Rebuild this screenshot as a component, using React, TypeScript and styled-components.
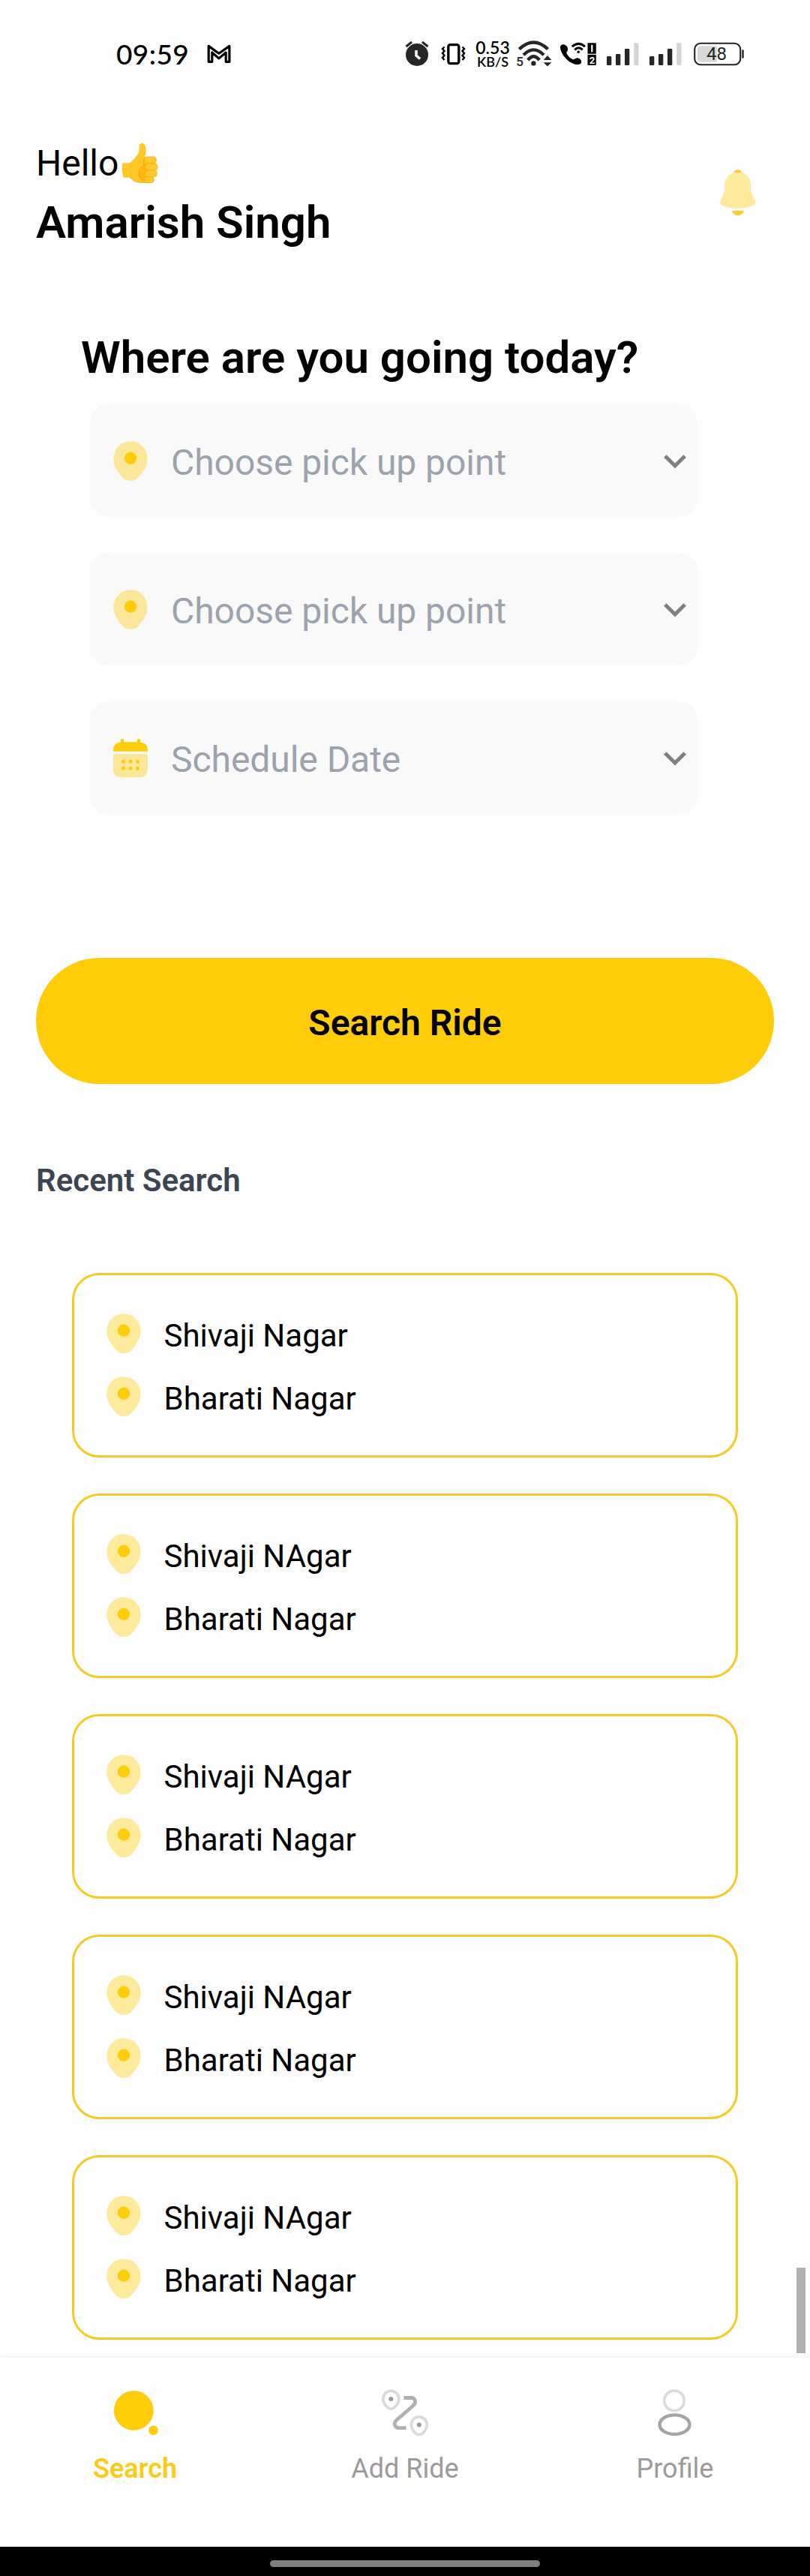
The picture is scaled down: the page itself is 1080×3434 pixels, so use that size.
import React from 'react';
import styled, { createGlobalStyle, css } from 'styled-components';

const YELLOW = '#fecc09';
const INK = '#262626';

const GlobalStyle = createGlobalStyle`
  *, *::before, *::after { box-sizing: border-box; }
  body {
    margin: 0;
    background: #fff;
    color: #000;
    font-family: Roboto, "Liberation Sans", sans-serif;
  }
  svg { display: block; flex: none; overflow: visible; }
`;

const Screen = styled.div`
  display: flex;
  flex-direction: column;
  width: 1080px;
  height: 3434px;
  overflow: hidden;
  background: #fefefe;
`;

/* ---------- status bar ---------- */

const StatusBar = styled.div`
  display: flex;
  flex: none;
  align-items: flex-start;
  justify-content: space-between;
  height: 144px;
  padding: 48px 88px 0 155px;
`;

const StatusGroup = styled.div`
  display: flex;
  align-items: center;
  height: 48px;
`;

const Clock = styled.span`
  width: 120px;
  font: 500 37px/44px Lato, sans-serif;
  letter-spacing: 0.4px;
`;

const Spacer = styled.span<{ $w: number }>`
  flex: none;
  width: ${(p) => p.$w}px;
`;

const NetSpeed = styled.div`
  display: flex;
  flex-direction: column;
  align-items: center;
  width: 50px;
  height: 40px;
  font-family: Lato, sans-serif;
  font-weight: 600;
  white-space: nowrap;
`;

const SpeedValue = styled.span`
  font-size: 23px;
  line-height: 22px;
`;

const SpeedUnit = styled.span`
  font-size: 18px;
  line-height: 16px;
`;

/* ---------- main content ---------- */

const Content = styled.main`
  display: flex;
  position: relative;
  flex: 1;
  flex-direction: column;
  min-height: 0;
  padding-top: 45px;
`;

const Header = styled.header`
  display: flex;
  justify-content: space-between;
  height: 143px;
  padding: 0 70px 0 48px;
`;

const Greeting = styled.div`
  display: flex;
  flex-direction: column;
  gap: 15px;
`;

const HelloLine = styled.div`
  display: flex;
  align-items: center;
  font-size: 48px;
  line-height: 57px;
`;

const UserName = styled.div`
  font-size: 60px;
  font-weight: 600;
  line-height: 71px;
`;

const BellButton = styled.button`
  display: flex;
  width: 52px;
  height: 65px;
  margin-top: 36px;
  padding: 0;
  border: 0;
  background: none;
`;

const Title = styled.h1`
  height: 71px;
  margin: 109px 0 0 108px;
  font-size: 60px;
  font-weight: 600;
  line-height: 71px;
`;

const Fields = styled.div`
  display: flex;
  flex-direction: column;
  gap: 48px;
  width: 810px;
  margin: 27px 0 0 120px;
`;

const Field = styled.div`
  display: flex;
  align-items: center;
  height: 150px;
  padding: 2px 15px 0 31px;
  border-radius: 24px;
  background: #f9f9f9;
`;

const Placeholder = styled.span`
  flex: 1;
  padding: 3px 0 0 31px;
  color: #9ca3af;
  font-size: 48px;
  line-height: 57px;
  letter-spacing: -0.05px;
`;

const SearchButton = styled.button`
  display: flex;
  flex: none;
  align-items: center;
  justify-content: center;
  height: 168px;
  margin: 192px 48px 0;
  padding: 5px 0 0;
  border: 0;
  border-radius: 84px;
  background: ${YELLOW};
  color: #000;
  font: 600 48px/57px Roboto, sans-serif;
`;

const SectionTitle = styled.h2`
  margin: 104px 0 0 48px;
  color: #3b4554;
  font-size: 42px;
  font-weight: 600;
  line-height: 49px;
`;

const RecentList = styled.div`
  display: flex;
  flex-direction: column;
  gap: 48px;
  margin: 99px 96px 0;
`;

const RecentCard = styled.article`
  display: flex;
  flex: none;
  flex-direction: column;
  height: 246px;
  padding: 51px 43px 0;
  border: 3px solid #f6ca25;
  border-radius: 36px;
`;

const Stop = styled.div`
  display: flex;
  align-items: flex-start;
  height: 84px;
`;

const StopName = styled.span`
  padding: 5px 0 0 30.5px;
  font-size: 42px;
  line-height: 49px;
`;

const ScrollThumb = styled.div`
  position: absolute;
  right: 6px;
  bottom: 6px;
  width: 12px;
  height: 114px;
  background: #afafaf;
`;

/* ---------- bottom navigation ---------- */

const TabBar = styled.nav`
  display: grid;
  position: relative;
  flex: none;
  grid-template-columns: repeat(3, 1fr);
  height: 252px;
  background: #fefefe;
  box-shadow: 0 -1px 7px rgba(0, 0, 0, 0.06);
`;

const Tab = styled.a<{ $active?: boolean }>`
  display: flex;
  flex-direction: column;
  align-items: center;
  padding-top: 36px;
  color: #9b9b9b;
  font-size: 36px;
  line-height: 42px;
  ${(p) =>
    p.$active &&
    css`
      color: #fbcb18;
      font-weight: 600;
    `}
`;

const TabIcon = styled.span`
  display: flex;
  width: 72px;
  height: 72px;
  margin-bottom: 19px;
`;

const GestureBar = styled.div`
  display: flex;
  flex: none;
  justify-content: center;
  height: 39px;
  padding-top: 18px;
  background: #000;
`;

const GesturePill = styled.div`
  width: 360px;
  height: 9px;
  border-radius: 5px;
  background: #808080;
`;

/* ---------- icons ---------- */

const MailIcon = () => (
  <svg width="34" height="28" viewBox="274 58 34 28">
    <path
      d="M277.2 82.3V61.4L290.8 71.2 304.9 61.4V82.3H300.2V70L290.8 77.9 281.8 70V82.3Z"
      fill="none"
      stroke="#000"
      strokeWidth="3.2"
      strokeLinejoin="round"
    />
  </svg>
);

const AlarmIcon = () => (
  <svg width="32" height="36" viewBox="540 55 32 36">
    <circle cx="556" cy="74" r="15" fill={INK} />
    <path d="M541.5 63 549 57M563 57 570.5 63" stroke={INK} strokeWidth="3" />
    <path d="M555 68V75L560 79.5" fill="none" stroke="#fff" strokeWidth="3.6" />
  </svg>
);

const VibrateIcon = () => (
  <svg width="32" height="36" viewBox="588 54 32 36">
    <rect x="597.8" y="59.6" width="14" height="25" rx="2.5" fill="none" stroke="#000" strokeWidth="3.3" />
    <path
      d="M592.5 62.5 590 65 592.5 68 590 71 592.5 74 590 77 592.5 80M616.5 62.5 619 65 616.5 68 619 71 616.5 74 619 77 616.5 80"
      fill="none"
      stroke="#000"
      strokeWidth="2.4"
    />
  </svg>
);

const WifiIcon = () => (
  <svg width="47" height="40" viewBox="688 52 47 40">
    <g fill="none" stroke={INK} strokeWidth="4.4">
      <path d="M692.3 65.5Q711.5 47.5 730.5 65.5" />
      <path d="M698 73.2Q711.5 59.5 725 73.2" />
      <path d="M703.8 80Q711.5 70.5 719.2 80" />
    </g>
    <circle cx="711.4" cy="84.4" r="3.2" fill={INK} />
    <path d="M724.6 80 730 74 735.4 80ZM724.6 83.3 730 88.5 735.4 83.3Z" fill={INK} />
    <text x="688.3" y="88" fontFamily="Roboto, sans-serif" fontWeight="500" fontSize="17" fill={INK}>
      5
    </text>
  </svg>
);

const CallIcon = () => (
  <svg width="50" height="34" viewBox="746 55 50 34">
    <path
      d="M747.2 65C746 60 750 58.4 752.5 59.5 755.5 60.5 757.5 63.5 757 66.5 756.5 69 754.8 69.2 755.6 71.3 757 75 760.3 77.7 763.8 79.2 765.8 80 766.3 77.5 769.5 77.2 772.5 77.2 776 80 775 83.5 774 86.5 769 86.5 766 85.5 757 82.5 749.5 74.5 747.2 65Z"
      fill="#000"
    />
    <g fill="none" stroke="#000" strokeWidth="3">
      <path d="M762.8 62.2Q771.5 54.5 780 62.2" />
      <path d="M766.3 66.4Q771.5 61 776.7 66.4" />
    </g>
    <circle cx="771.2" cy="69.3" r="1.8" fill="#000" />
    <rect x="783.5" y="57.3" width="11.3" height="14.4" fill="#000" />
    <rect x="783.5" y="72.9" width="11.3" height="14" fill="#000" />
    <path d="M789.3 59.8V69.4" stroke="#fff" strokeWidth="2.2" />
    <text x="785.7" y="84.6" fontFamily="Roboto, sans-serif" fontWeight="700" fontSize="13" fill="#fff">
      2
    </text>
  </svg>
);

const SignalIcon = () => (
  <svg width="43" height="34" viewBox="0 0 43 34">
    <g fill={INK}>
      <rect y="20" width="6.3" height="12" rx="1.2" />
      <rect x="12" y="17" width="6.3" height="15" rx="1.2" />
      <rect x="24" y="10" width="6.3" height="22" rx="1.2" />
    </g>
    <rect x="36.2" y="2.2" width="6.3" height="29.8" rx="1.2" fill="#d4d4d4" />
  </svg>
);

const BatteryIcon = () => (
  <svg width="67" height="32" viewBox="925 56.5 67 32">
    <rect x="926.2" y="58.2" width="61" height="28.6" rx="8" fill="none" stroke={INK} strokeWidth="2.1" />
    <path d="M955.7 61.8V83.2H935Q930 83.2 930 78.5V66.5Q930 61.8 935 61.8Z" fill="#d8d8d8" />
    <path d="M990.5 67V78" stroke={INK} strokeWidth="2.4" />
    <text x="942" y="80.8" fontFamily="Roboto, sans-serif" fontSize="24" fill={INK}>
      48
    </text>
  </svg>
);

const ThumbIcon = () => (
  <svg width="49.33" height="54.67" viewBox="398 60 148 164">
    <path
      d="M405 142Q418 144 432 141 450 126 465 104 470 96 469 72 471 63 481 63 493 64 496 84 498 103 490 122L488 216Q488 221 520 221 460 222 448 214 436 202 430 199 418 202 406 199 398 180 401 148 402 142 405 142Z"
      fill="#ffc828"
    />
    <path d="M480 158 500 124V216H486Q462 206 466 178Z" fill="#ffb60d" />
    <g fill="#ffc828" stroke="#eda90c" strokeWidth="2">
      <rect x="488" y="117" width="49" height="27" rx="12" />
      <rect x="493" y="144" width="49" height="27" rx="12" />
      <rect x="492" y="171" width="48" height="26" rx="12" />
      <rect x="489" y="197" width="39" height="24" rx="11" />
    </g>
    <path
      d="M490 122Q484 142 488 154 472 160 466 174M470 172Q464 194 486 214M430 199Q440 204 450 215 466 221 505 221"
      fill="none"
      stroke="#eda90c"
      strokeWidth="3"
    />
  </svg>
);

const BellIcon = () => (
  <svg width="51.67" height="65" viewBox="175 75 155 195">
    <path
      d="M236 89Q252 83 268 89 304 104 305 142 303 172 314 187 325 200 323 211 320 220 306 225 280 234 252 234 224 234 198 225 184 220 181 211 180 200 190 187 201 172 199 142 200 104 236 89Z"
      fill="#ffea9c"
    />
    <path d="M236 88Q240 79 252 79 264 79 268 88 252 94 236 88Z" fill="#fccd2b" />
    <path d="M228 244Q252 240 278 244 268 262 252 262 236 262 228 244Z" fill="#fccd2b" />
  </svg>
);

const PinIcon = () => (
  <svg width="46" height="53.33" viewBox="183 475 138 160">
    <path
      d="M252 476C292 476 320 508 320 546 320 574 303 597 288 615 276 630 264 634 252 634 240 634 228 630 216 615 201 597 184 574 184 546 184 508 212 476 252 476Z"
      fill={YELLOW}
      fillOpacity="0.4"
    />
    <circle cx="252" cy="543" r="24.5" fill={YELLOW} />
  </svg>
);

const CalendarIcon = () => (
  <svg width="46" height="53.33" viewBox="0 0 46 53">
    <path d="M0 21H46V41Q46 52 34 52H12Q0 52 0 41Z" fill={YELLOW} fillOpacity="0.4" />
    <path
      d="M0 17.5V16Q0 6 10 5.500V2.500Q10 .5 12 .5T14 2.500V5H32V2.500Q32 .5 34 .5T36 2.500V5.500Q46 6 46 16V17.5Z"
      fill={YELLOW}
    />
    <g fill={YELLOW}>
      <circle cx="13.500" cy="31" r="2.500" />
      <circle cx="23" cy="31" r="2.500" />
      <circle cx="32.500" cy="31" r="2.500" />
      <circle cx="13.500" cy="40" r="2.500" />
      <circle cx="23" cy="40" r="2.500" />
      <circle cx="32.500" cy="40" r="2.500" />
    </g>
  </svg>
);

const ChevronIcon = () => (
  <svg width="30" height="18" viewBox="0 0 30 18">
    <path d="M1.800 2 15 15 28.200 2" fill="none" stroke="#808080" strokeWidth="5" />
  </svg>
);

const SearchTabIcon = () => (
  <svg width="72" height="72" viewBox="144 3179 72 72">
    <circle cx="178.300" cy="3213.400" r="26.400" fill={YELLOW} />
    <circle cx="204.400" cy="3239.700" r="6.300" fill={YELLOW} />
  </svg>
);

const RouteIcon = () => (
  <svg width="72" height="72" viewBox="504 3179 72 72">
    <path
      d="M538.500 3196.500H549Q554.500 3197 553.500 3203.500 552 3206 548 3209.500L530 3225Q525 3229 526.500 3233 528 3236.500 532 3236.700H541.500"
      fill="none"
      stroke="#b0b0b0"
      strokeWidth="4.800"
    />
    {[
      [521.3, 3198],
      [558.8, 3232.600],
    ].map(([x, y]) => (
      <g key={x} transform={`translate(${x} ${y})`}>
        <path
          d="M0 -10.800C6 -10.800 10.500 -6 10.500 0 10.500 5 7.500 8.500 5 11 2 13.800 -2 13.800 -5 11 -7.500 8.500 -10.500 5 -10.500 0 -10.500 -6 -6 -10.800 0 -10.800Z"
          fill="none"
          stroke="#dadada"
          strokeWidth="3.600"
        />
        <circle r="3" fill="#9a9a9a" />
      </g>
    ))}
  </svg>
);

const ProfileIcon = () => (
  <svg width="72" height="72" viewBox="864 3179 72 72">
    <circle cx="899" cy="3200.300" r="13.300" fill="none" stroke="#dadada" strokeWidth="3.600" />
    <ellipse cx="899.500" cy="3232.200" rx="20" ry="12.800" fill="none" stroke="#a4a4a4" strokeWidth="4.400" />
  </svg>
);

/* ---------- data ---------- */

const fields = [
  { label: 'Choose pick up point', Icon: PinIcon },
  { label: 'Choose pick up point', Icon: PinIcon },
  { label: 'Schedule Date', Icon: CalendarIcon },
];

const recent = [
  ['Shivaji Nagar', 'Bharati Nagar'],
  ['Shivaji NAgar', 'Bharati Nagar'],
  ['Shivaji NAgar', 'Bharati Nagar'],
  ['Shivaji NAgar', 'Bharati Nagar'],
  ['Shivaji NAgar', 'Bharati Nagar'],
];

const tabs = [
  { label: 'Search', Icon: SearchTabIcon, active: true },
  { label: 'Add Ride', Icon: RouteIcon, active: false },
  { label: 'Profile', Icon: ProfileIcon, active: false },
];

export default function App() {
  return (
    <>
      <GlobalStyle />
      <Screen>
        <StatusBar>
          <StatusGroup>
            <Clock>09:59</Clock>
            <MailIcon />
          </StatusGroup>
          <StatusGroup>
            <AlarmIcon />
            <Spacer $w={16} />
            <VibrateIcon />
            <Spacer $w={12} />
            <NetSpeed>
              <SpeedValue>0.53</SpeedValue>
              <SpeedUnit>KB/S</SpeedUnit>
            </NetSpeed>
            <Spacer $w={6} />
            <WifiIcon />
            <Spacer $w={11} />
            <CallIcon />
            <Spacer $w={13} />
            <SignalIcon />
            <Spacer $w={14} />
            <SignalIcon />
            <Spacer $w={16} />
            <BatteryIcon />
          </StatusGroup>
        </StatusBar>

        <Content>
          <Header>
            <Greeting>
              <HelloLine>
                Hello
                <Spacer $w={4} />
                <ThumbIcon />
              </HelloLine>
              <UserName>Amarish Singh</UserName>
            </Greeting>
            <BellButton aria-label="Notifications">
              <BellIcon />
            </BellButton>
          </Header>

          <Title>Where are you going today?</Title>

          <Fields>
            {fields.map(({ label, Icon }, i) => (
              <Field key={i}>
                <Icon />
                <Placeholder>{label}</Placeholder>
                <ChevronIcon />
              </Field>
            ))}
          </Fields>

          <SearchButton>Search Ride</SearchButton>

          <SectionTitle>Recent Search</SectionTitle>

          <RecentList>
            {recent.map((stops, i) => (
              <RecentCard key={i}>
                {stops.map((name) => (
                  <Stop key={name}>
                    <PinIcon />
                    <StopName>{name}</StopName>
                  </Stop>
                ))}
              </RecentCard>
            ))}
          </RecentList>
          <ScrollThumb />
        </Content>

        <TabBar>
          {tabs.map(({ label, Icon, active }) => (
            <Tab key={label} $active={active}>
              <TabIcon>
                <Icon />
              </TabIcon>
              {label}
            </Tab>
          ))}
        </TabBar>

        <GestureBar>
          <GesturePill />
        </GestureBar>
      </Screen>
    </>
  );
}
